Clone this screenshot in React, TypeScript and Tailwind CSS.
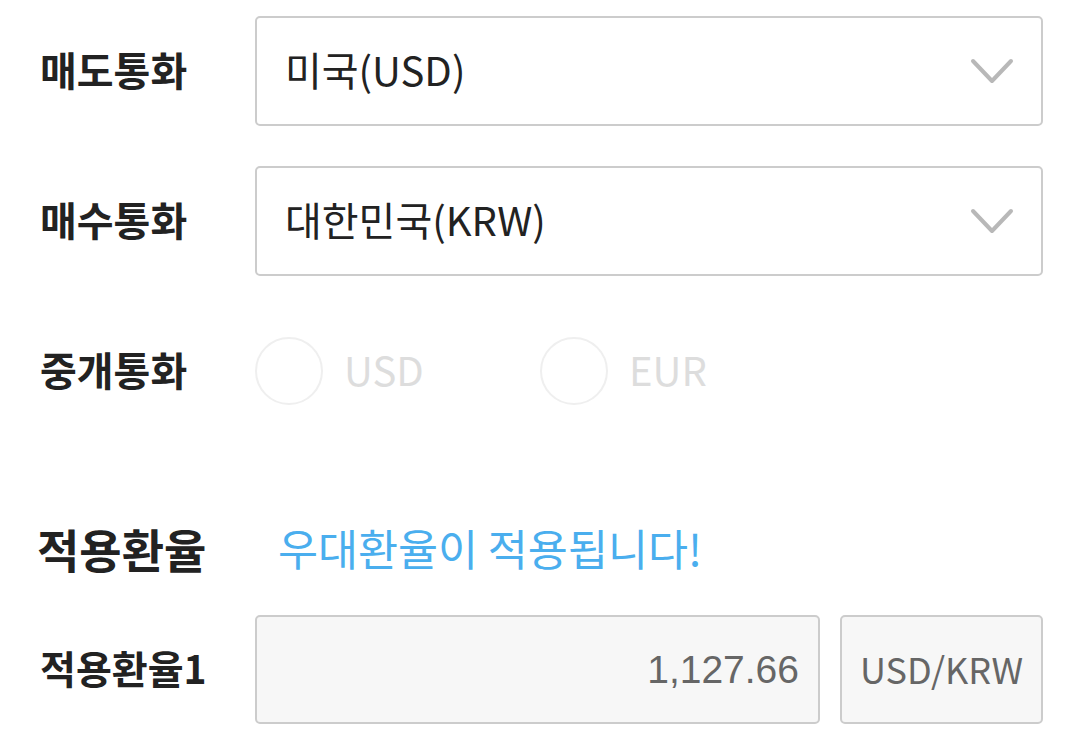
import React from "react";

const font = { fontFamily: '"Noto Sans CJK KR", "Noto Sans", sans-serif' };

function Chevron() {
  return (
    <svg width="44" height="28" viewBox="0 0 44 28" className="mb-[1px] shrink-0">
      <polyline points="3,4 22,24 41,4" fill="none" stroke="#b8b8b8" strokeWidth="4" strokeLinecap="round" strokeLinejoin="round" />
    </svg>
  );
}

function SelectRow({ label, value }: { label: string; value: string }) {
  return (
    <div className="flex items-center">
      <div className="w-[215px] pb-[5px] text-[40px] font-bold leading-none text-[#222]">{label}</div>
      <div className="flex h-[110px] flex-1 items-center justify-between rounded-[5px] border-2 border-[#cccccc] bg-white pl-[28px] pr-[27px]">
        <span className="pb-[4px] text-[40px] leading-none text-[#222]">{value}</span>
        <Chevron />
      </div>
    </div>
  );
}

function Radio({ label }: { label: string }) {
  return (
    <div className="flex w-[285px] items-center gap-[21px]">
      <div className="h-[68px] w-[68px] rounded-full border-2 border-[#efefef]" />
      <span className="pb-[4px] text-[40px] leading-none text-[#dddddd]">{label}</span>
    </div>
  );
}

export default function App() {
  return (
    <div className="min-h-[750px] w-[1080px] bg-white pl-[40px] pr-[37px] pt-[16px]" style={font}>
      <SelectRow label="매도통화" value="미국(USD)" />
      <div className="mt-[40px]">
        <SelectRow label="매수통화" value="대한민국(KRW)" />
      </div>
      <div className="mt-[40px] flex h-[110px] items-center">
        <div className="w-[215px] pb-[5px] text-[40px] font-bold leading-none text-[#222]">중개통화</div>
        <Radio label="USD" />
        <Radio label="EUR" />
      </div>
      <div className="mt-[93px] flex h-[60px] items-center">
        <div className="-ml-[3px] w-[241px] pb-[3px] text-[46px] font-bold leading-none text-[#222]">적용환율</div>
        <div className="pb-[3px] text-[43.5px] leading-none text-[#4aaeee]">우대환율이 적용됩니다!</div>
      </div>
      <div className="mt-[36px] flex items-center">
        <div className="w-[215px] pb-[5px] text-[39px] font-bold leading-none text-[#222]">적용환율1</div>
        <div className="flex h-[109px] flex-1 items-center justify-end rounded-[5px] border-2 border-[#cccccc] bg-[#f7f7f7] pr-[19px]">
          <span className="text-[39px] leading-none text-[#666]" style={{ fontFamily: '"Liberation Sans", Arial, sans-serif' }}>1,127.66</span>
        </div>
        <div className="ml-[20px] flex h-[109px] w-[203px] items-center justify-center rounded-[5px] border-2 border-[#cccccc] bg-[#f7f7f7]">
          <span className="pb-[3px] text-[36px] leading-none text-[#666]">USD/KRW</span>
        </div>
      </div>
    </div>
  );
}
